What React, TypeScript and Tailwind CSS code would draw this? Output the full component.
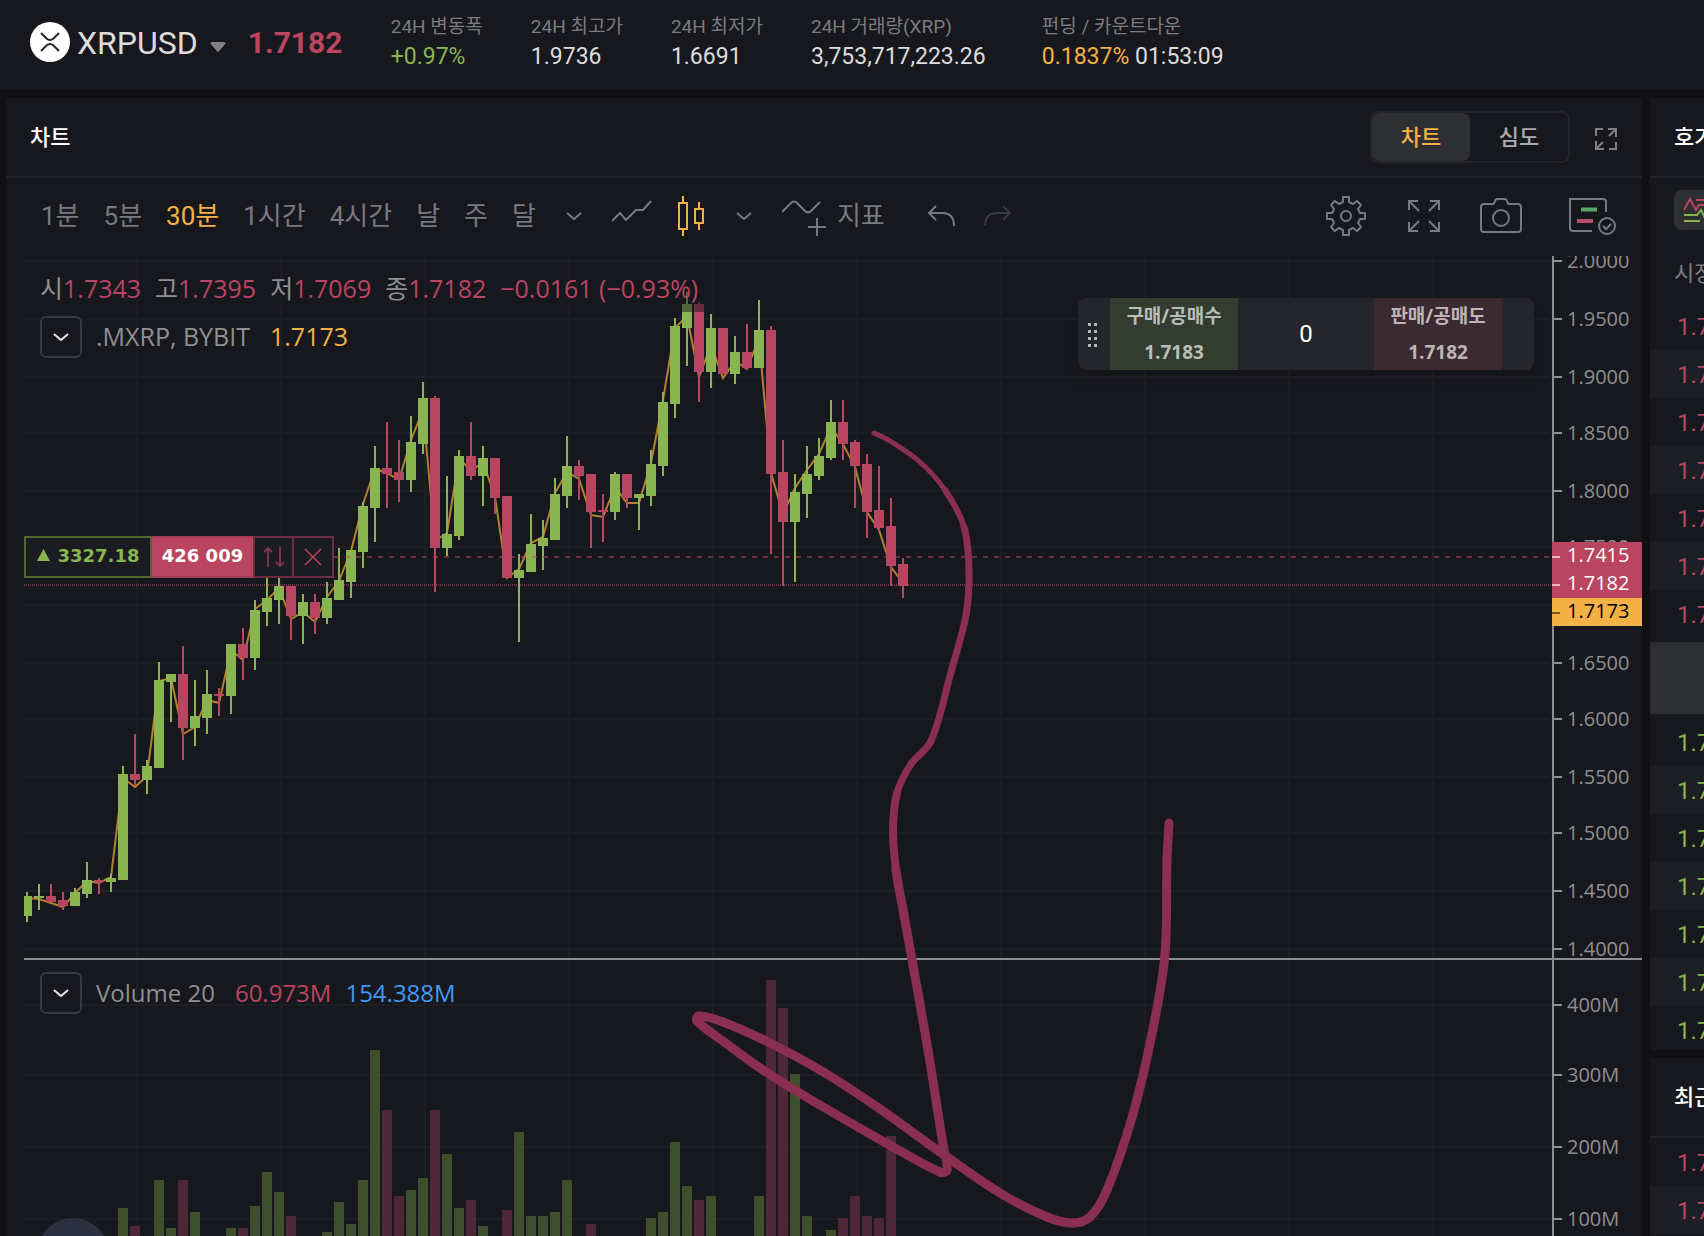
import type { ReactNode } from "react";

const FONT_UI = "font-[Roboto,'Noto_Sans_CJK_KR',sans-serif]";
const FONT_CHART = "font-['Open_Sans','Noto_Sans_CJK_KR',sans-serif]";

type Candle = [up: 0 | 1, high: number, top: number, bottom: number, low: number];

const FIRST_X = 27;
const STEP = 12;

const candles: Candle[] = [
  [1, 892, 896, 916, 922], [1, 884, 896, 898, 910], [0, 884, 896, 902, 902], [0, 892, 900, 906, 910],
  [1, 888, 892, 906, 906], [1, 862, 880, 894, 898], [0, 878, 880, 882, 894], [1, 874, 878, 882, 892],
  [1, 766, 774, 880, 880], [0, 734, 774, 780, 786], [1, 760, 766, 780, 794], [1, 662, 680, 768, 768],
  [1, 674, 674, 682, 722], [0, 646, 674, 728, 760], [1, 680, 716, 728, 746], [1, 670, 694, 718, 734],
  [0, 688, 694, 696, 716], [1, 644, 644, 696, 714], [0, 628, 644, 658, 680], [1, 600, 610, 658, 670],
  [1, 572, 598, 612, 626], [1, 574, 586, 600, 624], [0, 586, 586, 616, 640], [1, 594, 602, 616, 644],
  [0, 594, 602, 618, 634], [1, 582, 598, 618, 624], [1, 548, 580, 600, 600], [1, 550, 550, 582, 598],
  [1, 502, 506, 552, 568], [1, 446, 468, 508, 542], [0, 422, 468, 474, 508], [0, 440, 472, 480, 502],
  [1, 416, 442, 480, 492], [1, 382, 398, 444, 454], [0, 396, 398, 548, 592], [1, 476, 534, 548, 556],
  [1, 450, 456, 536, 540], [0, 422, 456, 476, 480], [1, 446, 458, 476, 506], [0, 458, 458, 498, 514],
  [0, 496, 496, 578, 578], [1, 554, 570, 578, 642], [1, 514, 544, 572, 572], [1, 520, 538, 546, 570],
  [1, 478, 494, 540, 540], [1, 436, 466, 496, 508], [0, 460, 466, 476, 500], [0, 474, 474, 512, 548],
  [0, 494, 510, 512, 542], [1, 472, 474, 512, 520], [0, 474, 474, 498, 508], [1, 494, 494, 498, 530],
  [1, 450, 464, 496, 506], [1, 392, 402, 466, 476], [1, 318, 326, 404, 418], [1, 292, 304, 328, 366],
  [0, 302, 304, 372, 402], [1, 314, 328, 372, 388], [0, 328, 328, 374, 374], [1, 336, 352, 374, 384],
  [0, 324, 352, 368, 370], [1, 300, 330, 368, 368], [0, 326, 330, 474, 554], [0, 440, 472, 522, 586],
  [1, 474, 492, 522, 582], [1, 446, 474, 494, 518], [1, 438, 456, 476, 480], [1, 400, 422, 458, 460],
  [0, 400, 422, 444, 460], [0, 440, 442, 466, 508], [0, 454, 464, 512, 538], [0, 466, 510, 528, 532],
  [0, 498, 526, 566, 586], [0, 558, 564, 586, 598],
];

const markLine = [
  898, 899, 903, 907, 893, 881, 883, 877, 778, 787, 776, 681, 678, 734, 727, 700, 703, 650, 660, 609,
  600, 588, 619, 612, 622, 597, 581, 551, 504, 469, 473, 480, 440, 410, 541, 533, 458, 471, 462, 497,
  578, 569, 543, 537, 493, 472, 479, 515, 517, 487, 503, 503, 463, 400, 328, 316, 377, 345, 378, 361,
  369, 338, 473, 514, 488, 470, 454, 427, 444, 467, 512, 530, 567, 583,
];

type Bar = [index: number, up: 0 | 1, top: number];

const volumes: Bar[] = [
  [8, 1, 1208], [9, 0, 1226], [11, 1, 1180], [12, 1, 1228], [13, 0, 1180], [14, 1, 1212], [17, 1, 1228],
  [18, 0, 1228], [19, 1, 1206], [20, 1, 1172], [21, 1, 1192], [22, 0, 1216], [25, 1, 1232], [26, 1, 1202],
  [27, 1, 1224], [28, 1, 1180], [29, 1, 1050], [30, 0, 1110], [31, 0, 1196], [32, 1, 1190], [33, 1, 1178],
  [34, 0, 1110], [35, 1, 1154], [36, 1, 1208], [37, 0, 1200], [38, 1, 1226], [40, 0, 1210], [41, 1, 1132],
  [42, 1, 1216], [43, 1, 1216], [44, 1, 1212], [45, 1, 1180], [47, 0, 1224], [52, 1, 1218], [53, 1, 1212],
  [54, 1, 1142], [55, 1, 1186], [56, 0, 1200], [57, 1, 1196], [61, 1, 1196], [62, 0, 980], [63, 0, 1008],
  [64, 1, 1074], [65, 1, 1216], [67, 1, 1230], [68, 0, 1218], [69, 0, 1196], [70, 0, 1216], [71, 0, 1218],
  [72, 0, 1136],
];

const priceTicks: [string, number][] = [
  ["2.0000", 261], ["1.9500", 319], ["1.9000", 377], ["1.8500", 433], ["1.8000", 491], ["1.7500", 547],
  ["", 605], ["1.6500", 663], ["1.6000", 719], ["1.5500", 777], ["1.5000", 833], ["1.4500", 891], ["1.4000", 949],
];
const volumeTicks: [string, number][] = [["400M", 1005], ["300M", 1075], ["200M", 1147], ["100M", 1219]];
const timeLines = [137, 281, 425, 569, 713, 857, 1001, 1145, 1289, 1433];

type Point = [x: number, y: number, width: number];

// Brush stroke: each point carries the pen width used up to the next one.
const brush: Point[] = [
  [874, 433, 5], [890, 441, 5], [920, 462, 5], [945, 490, 6], [964, 527, 7], [969, 571, 7], [966, 615, 7],
  [951, 672, 7], [931, 741, 7], [911, 764, 7], [897, 793, 8], [893, 830, 8], [896, 870, 9], [904, 915, 9],
  [913, 965, 9], [928, 1050, 9], [943, 1145, 9], [947, 1170, 9], [940, 1172, 9], [893, 1147, 9],
  [813, 1101, 9], [763, 1070, 9], [727, 1044, 9], [697, 1021, 9], [699, 1016, 9], [723, 1022, 9],
  [772, 1044, 9], [825, 1073, 9], [880, 1109, 9], [940, 1152, 9], [1000, 1193, 9], [1047, 1217, 9],
  [1073, 1223, 9], [1090, 1217, 9], [1107, 1190, 9], [1133, 1114, 9], [1153, 1029, 9], [1165, 954, 9],
  [1167, 860, 9], [1169, 823, 9],
];

function brushSegment(i: number) {
  const a = brush[Math.max(0, i - 1)];
  const b = brush[i];
  const c = brush[i + 1];
  const e = brush[Math.min(brush.length - 1, i + 2)];
  const len = Math.hypot(c[0] - b[0], c[1] - b[1]);
  const t1 = len / (Math.hypot(c[0] - a[0], c[1] - a[1]) || 1) / 3;
  const t2 = len / (Math.hypot(e[0] - b[0], e[1] - b[1]) || 1) / 3;
  return `M${b[0]} ${b[1]} C${b[0] + (c[0] - a[0]) * t1} ${b[1] + (c[1] - a[1]) * t1} ${c[0] - (e[0] - b[0]) * t2} ${c[1] - (e[1] - b[1]) * t2} ${c[0]} ${c[1]}`;
}

const cx = (i: number) => FIRST_X + STEP * i;

function Plot() {
  return (
    <svg className="absolute inset-0 h-full w-full" aria-hidden="true">
      <g transform="translate(-24 -256)">
        <g fill="#1e1f24">
          {timeLines.map((x) => (
            <rect key={x} x={x - 1} y="256" width="2" height="1200" />
          ))}
          {[...priceTicks, ...volumeTicks].map(([, y]) => (
            <rect key={y} x="25" y={y - 1} width="1525" height="2" />
          ))}
        </g>
        {volumes.map(([i, up, top]) => (
          <rect key={i} x={cx(i) - 5} y={top} width="10" height={1400 - top} fill={up ? "#3f4e2d" : "#4e2838"} />
        ))}
        <circle cx="73" cy="1254" r="36" fill="#2d3040" />
        <path d="M24 585H1552" stroke="#782f48" strokeWidth="2" strokeDasharray="1 1" />
        <polyline
          points={markLine.map((y, i) => `${cx(i)},${y}`).join(" ")}
          fill="none"
          stroke="#b0822f"
          strokeWidth="2"
        />
        {candles.map(([up, high, top, bottom, low], i) => (
          <g key={i} fill={up ? "#8ab44f" : "#b94561"}>
            <rect x={cx(i) - 1} y={high} width="2" height={low - high} />
            <rect x={cx(i) - 5} y={top} width="10" height={bottom - top} />
          </g>
        ))}
        <path d="M334 557H1552" stroke="#b94561" strokeOpacity=".5" strokeWidth="2" strokeDasharray="5 6" />
      </g>
    </svg>
  );
}

function Drawing() {
  return (
    <svg className="pointer-events-none absolute inset-0 h-full w-full" aria-hidden="true">
      <g transform="translate(-24 -256)" fill="none" stroke="#8b2f50" strokeLinecap="round" strokeLinejoin="round">
        {brush.slice(0, -1).map((p, i) => (
          <path key={i} d={brushSegment(i)} strokeWidth={p[2]} />
        ))}
      </g>
    </svg>
  );
}

function Axis() {
  return (
    <svg className="h-full w-full" fontSize="20" role="img" aria-label="가격 축">
      <g transform="translate(-1552 -256)">
        <rect x="1552" y="256" width="2" height="1200" fill="#8e8f93" />
        {[...priceTicks, ...volumeTicks].map(([label, y]) => (
          <g key={y} fill="#8e8f93">
            <rect x="1554" y={y - 1} width="8" height="2" />
            <text x="1567" y={y + 7}>{label}</text>
          </g>
        ))}
        <rect x="1552" y="542" width="90" height="56" fill="#b94561" />
        <rect x="1552" y="598" width="90" height="28" fill="#f4b145" />
        <g fill="#fff">
          <rect x="1552" y="556" width="8" height="2" fillOpacity=".6" />
          <rect x="1552" y="584" width="8" height="2" fillOpacity=".6" />
          <text x="1567" y="562">1.7415</text>
          <text x="1567" y="590">1.7182</text>
        </g>
        <rect x="1552" y="612" width="8" height="2" fillOpacity=".5" />
        <text x="1567" y="618">1.7173</text>
      </g>
    </svg>
  );
}

function Chevron({ className = "" }: { className?: string }) {
  return (
    <svg className={className} width="16" height="8" viewBox="0 0 16 8" fill="none" stroke="currentColor" strokeWidth="2">
      <path d="M1 1l7 6 7-6" />
    </svg>
  );
}

function Stat({ label, children }: { label: string; children: ReactNode }) {
  return (
    <div className="whitespace-nowrap last:pl-2">
      <dt className="text-[19px] leading-7 text-[#7b7c80]">{label}</dt>
      <dd className="text-[23px] leading-8 text-[#dcdcdd]">{children}</dd>
    </div>
  );
}

function Header() {
  return (
    <header className="flex h-[90px] shrink-0 items-start bg-[#17181e] pl-[30px]">
      <div className="flex h-[84px] items-center">
        <svg width="40" height="40" viewBox="0 0 40 40" role="img" aria-label="XRP">
          <circle cx="20" cy="20" r="20" fill="#fff" />
          <path
            d="M11 11l5.500 5.500q3.500 3 7 0L29 11M11 29l5.500-5.500q3.500-3 7 0L29 29"
            fill="none"
            stroke="#23292f"
            strokeWidth="2"
          />
        </svg>
        <button type="button" className="ml-[7px] flex items-center gap-3 pt-[2px] text-[32px] leading-10 text-[#dcdcdd]">
          XRPUSD
          <svg className="mt-2" width="16" height="10" viewBox="0 0 16 10" fill="#808083">
            <path d="M2 0h12q2.500 .5 1.200 2L9.200 9q-1.200 1.400-2.400 0L.8 2Q-.5 .5 2 0z" />
          </svg>
        </button>
        <strong className="ml-[22px] w-[94px] pt-[2px] text-[30px] leading-10 font-bold text-[#b94561]">1.7182</strong>
      </div>
      <dl className="ml-[49px] flex gap-12 pt-[13px]">
        <Stat label="24H 변동폭"><span className="text-[#8ab44f]">+0.97%</span></Stat>
        <Stat label="24H 최고가">1.9736</Stat>
        <Stat label="24H 최저가">1.6691</Stat>
        <Stat label="24H 거래량(XRP)">3,753,717,223.26</Stat>
        <Stat label="펀딩 / 카운트다운"><span className="text-[#f4b145]">0.1837%</span> 01:53:09</Stat>
      </dl>
    </header>
  );
}

function PanelHead() {
  return (
    <div className="flex h-20 shrink-0 items-center border-b-2 border-[#24252a] pr-[25px] pl-6">
      <h2 className="text-[22px] font-medium text-white">차트</h2>
      <div className="ml-auto flex h-[52px] w-[200px] rounded-lg border-2 border-[#24252a] text-[22px] font-medium">
        <button type="button" className="flex-1 rounded-lg bg-[#2e2f33] text-[#f4b145]">차트</button>
        <button type="button" className="flex-1 text-[#a9aaad]">심도</button>
      </div>
      <button type="button" aria-label="확대" className="mt-1 ml-[25px] text-[#808083]">
        <svg width="22" height="22" viewBox="0 0 22 22" fill="none" stroke="currentColor" strokeWidth="2">
          <path d="M1 8V1h7M13 1h8v8M21 1l-7 7M21 14v7h-7M1 13v8h8M1 21l7-7" />
        </svg>
      </button>
    </div>
  );
}

const intervals = ["1분", "5분", "30분", "1시간", "4시간", "날", "주", "달"];

function Toolbar() {
  return (
    <div className="flex h-[78px] shrink-0 items-center pr-[26px] pb-[2px] pl-[35px] text-[26px] text-[#787883]">
      <div className="flex gap-6 leading-8">
        {intervals.map((t) => (
          <button key={t} type="button" className={t === "30분" ? "text-[#f4b145]" : ""}>{t}</button>
        ))}
      </div>
      <button type="button" aria-label="시간 간격" className="ml-[30px]"><Chevron /></button>
      <button type="button" aria-label="라인" className="ml-[30px]">
        <svg width="40" height="40" viewBox="0 0 40 40" fill="none" stroke="currentColor" strokeWidth="2">
          <path d="M0 25l8-8 6 7 10-10h7l8-9" />
        </svg>
      </button>
      <button type="button" aria-label="캔들" className="ml-[26px] text-[#f4b145]">
        <svg width="26" height="40" viewBox="0 0 26 40" fill="none" stroke="currentColor" strokeWidth="2">
          <path d="M1 7h8v26H1zM5 0v7M5 33v7M17 13h8v14h-8zM21 6v7M21 27v7" />
        </svg>
      </button>
      <button type="button" aria-label="차트 유형" className="ml-8"><Chevron /></button>
      <button type="button" className="ml-[30px] flex items-center gap-[11px] leading-8">
        <svg width="44" height="44" viewBox="0 0 44 44" fill="none" stroke="currentColor" strokeWidth="2">
          <path d="M0 18l9-9q3-3 6 0l8 8q3 3 6 0l9-9M35 24v18M26 33h18" />
        </svg>
        지표
      </button>
      <button type="button" aria-label="실행 취소" className="ml-[43px]">
        <svg width="28" height="24" viewBox="0 0 28 24" fill="none" stroke="currentColor" strokeWidth="2">
          <path d="M8 2L1 9l7 7M1 9h13q12 0 12 13" />
        </svg>
      </button>
      <button type="button" aria-label="다시 실행" className="ml-7 text-[#38393f]">
        <svg width="28" height="24" viewBox="0 0 28 24" fill="none" stroke="currentColor" strokeWidth="2">
          <path d="M19 2l7 7-7 7M26 9H13Q1 9 1 22" />
        </svg>
      </button>
      <div className="ml-auto flex items-center">
        <button type="button" aria-label="설정">
          <svg width="40" height="40" viewBox="0 0 40 40" fill="none" stroke="currentColor" strokeWidth="2" strokeLinejoin="round">
            <path d="M17 1h6v5l4 2 4-3 4 4-3 4 2 4h5v6h-5l-2 4 3 4-4 4-4-3-4 2v5h-6v-5l-4-2-4 3-4-4 3-4-2-4H1v-6h5l2-4-3-4 4-4 4 3 4-2z" />
            <circle cx="20" cy="20" r="5" />
          </svg>
        </button>
        <button type="button" aria-label="전체 화면" className="ml-[42px]">
          <svg width="32" height="32" viewBox="0 0 32 32" fill="none" stroke="currentColor" strokeWidth="2">
            <path d="M1 10V1h9M1 1l10 10M22 1h9v9M31 1L21 11M1 22v9h9M1 31l10-10M31 22v9h-9M31 31L21 21" />
          </svg>
        </button>
        <button type="button" aria-label="스크린샷" className="ml-10">
          <svg width="42" height="36" viewBox="0 0 42 36" fill="none" stroke="currentColor" strokeWidth="2">
            <path d="M4 6h9q1 0 1.500-1.500L15 3q.5-2 2.500-2h7q2 0 2.500 2l.5 1.500Q28 6 29 6h9q3 0 3 3v22q0 3-3 3H4q-3 0-3-3V9q0-3 3-3z" />
            <circle cx="21" cy="20" r="8" />
          </svg>
        </button>
        <button type="button" aria-label="주문 표시" className="ml-[47px]">
          <svg width="47" height="38" viewBox="0 0 47 38" fill="none" stroke="currentColor" strokeWidth="2">
            <path d="M23 34H4q-3 0-3-3V2h33q3 0 3 3v10" />
            <path d="M12 12.500h16" stroke="#55a765" strokeWidth="4" />
            <path d="M8 24h16" stroke="#b3506a" strokeWidth="4" />
            <circle cx="38" cy="29" r="8" />
            <path d="M34 29l3 3 5-5" />
          </svg>
        </button>
      </div>
    </div>
  );
}

function Ohlc({ k, v }: { k: string; v: string }) {
  return (
    <span className="text-[#8e8f93]">{k}<span className="text-[#b94561]">{v}</span></span>
  );
}

function CollapseButton({ label }: { label: string }) {
  return (
    <button
      type="button"
      aria-label={label}
      className="flex size-[42px] items-center justify-center rounded-md border-2 border-[#363743] bg-[#17181e] text-[#e4e4ea]"
    >
      <Chevron />
    </button>
  );
}

function OrderWidget() {
  return (
    <div className="absolute top-[42px] right-[18px] flex h-[72px] w-[456px] overflow-hidden rounded-lg bg-[#25262b] shadow-lg">
      <div className="flex w-8 items-center justify-center pr-[2px]">
        <svg width="10" height="26" viewBox="0 0 10 26" fill="#b5b6ba">
          {[2, 9, 16, 23].map((y) => (
            <g key={y}>
              <rect x="0" y={y} width="3" height="3" />
              <rect x="6" y={y} width="3" height="3" />
            </g>
          ))}
        </svg>
      </div>
      <button type="button" className="w-32 bg-[#333c2f] text-[19px] leading-9 font-bold text-[#b8bdb5]">
        <span className="block">구매/공매수</span>
        <span className="block">1.7183</span>
      </button>
      <input
        aria-label="수량"
        defaultValue="0"
        className="min-w-0 flex-1 bg-transparent text-center font-[Roboto,sans-serif] text-2xl text-white outline-none"
      />
      <button type="button" className="w-32 bg-[#3c2a31] text-[19px] leading-9 font-bold text-[#bfb3b7]">
        <span className="block">판매/공매도</span>
        <span className="block">1.7182</span>
      </button>
      <div className="w-8" />
    </div>
  );
}

function Position() {
  return (
    <div className="absolute top-[280px] left-0 flex h-[42px] items-stretch bg-[#1b1c21] font-['DejaVu_Sans',sans-serif] text-[18px] font-bold">
      <div className="flex w-32 items-center justify-center gap-2 border-2 border-[#51652f] pb-1 text-[#8ab44f]">
        <svg width="13" height="12" viewBox="0 0 13 12" fill="currentColor"><path d="M6.500 0L13 12H0z" /></svg>
        3327.18
      </div>
      <div className="flex w-[101px] items-center justify-center border-y-2 border-[#a03d57] bg-[#b94561] pb-1 text-white">426 009</div>
      <button type="button" aria-label="포지션 반전" className="flex w-[41px] items-center justify-center border-2 border-[#6b2e43] text-[#7d344b]">
        <svg width="20" height="20" viewBox="0 0 20 20" fill="none" stroke="currentColor" strokeWidth="2">
          <path d="M4 20V1M0 5l4-4 4 4M16 0v19M12 15l4 4 4-4" />
        </svg>
      </button>
      <button type="button" aria-label="포지션 닫기" className="flex w-10 items-center justify-center border-y-2 border-r-2 border-[#6b2e43] text-[#b94561]">
        <svg width="18" height="18" viewBox="0 0 18 18" fill="none" stroke="currentColor" strokeWidth="1.500">
          <path d="M1 1l16 16M17 1L1 17" />
        </svg>
      </button>
    </div>
  );
}

function ChartArea() {
  return (
    <div className={`relative flex min-h-0 flex-1 pl-[18px] ${FONT_CHART}`}>
      <div className="relative min-w-0 flex-1">
        <Plot />
        <div className="relative h-[702px] pt-3 pl-4">
          <div className="flex w-max gap-[14px] bg-[#17181e]/50 pr-2 pb-1 text-[25px] leading-10 whitespace-nowrap text-[#b94561]">
            <Ohlc k="시" v="1.7343" />
            <Ohlc k="고" v="1.7395" />
            <Ohlc k="저" v="1.7069" />
            <Ohlc k="종" v="1.7182" />
            <span>−0.0161 (−0.93%)</span>
          </div>
          <div className="mt-1 flex items-center text-[25px] text-[#8e8f93]">
            <CollapseButton label="지표 접기" />
            <span className="ml-[14px]">.MXRP, BYBIT</span>
            <span className="ml-5 text-[#f4b145]">1.7173</span>
          </div>
        </div>
        <div className="relative flex items-center pt-[14px] pl-4 text-2xl text-[#8e8f93]">
          <CollapseButton label="거래량 접기" />
          <span className="ml-[14px]">Volume 20</span>
          <span className="ml-5 text-[#b94561]">60.973M</span>
          <span className="ml-[14px] text-[#4298f5]">154.388M</span>
        </div>
        <Position />
        <OrderWidget />
      </div>
      <div className="w-[90px] shrink-0"><Axis /></div>
      <div className="absolute top-[702px] right-0 left-[18px] h-[2px] bg-[#8e8f93]" />
      <div className="pointer-events-none absolute inset-0 left-[18px]"><Drawing /></div>
    </div>
  );
}

function PriceRows({ count, className }: { count: number; className: string }) {
  return (
    <ul className={className}>
      {Array.from({ length: count }, (_, i) => (
        <li key={i} className="h-12 pl-[27px] text-2xl leading-[50px] odd:bg-[#17181e] even:bg-[#1e1f24]">1.7</li>
      ))}
    </ul>
  );
}

function SideColumn() {
  return (
    <aside className="flex w-[54px] shrink-0 flex-col gap-2 overflow-hidden whitespace-nowrap">
      <section className="h-[952px] shrink-0 overflow-hidden bg-[#17181e]">
        <h2 className="flex h-20 w-24 items-center border-b-2 border-[#24252a] pl-6 text-[22px] font-medium text-white">호가</h2>
        <div className="h-[64px] w-24 pt-3 pl-6">
          <button type="button" aria-label="호가창 보기" className="block size-10 rounded-lg bg-[#2e2f33]">
            <svg width="40" height="40" viewBox="0 0 40 40" fill="none" strokeWidth="2">
              <path d="M10 20l6-11 6 11 3-5h9M22 10h12" stroke="#b94561" />
              <path d="M10 25h13l4-5 4 8h4M10 31h16" stroke="#8ab44f" />
            </svg>
          </button>
        </div>
        <p className="h-[60px] w-24 pt-[2px] pl-6 text-[22px] leading-[60px] text-[#7b7c80]">시장</p>
        <PriceRows count={7} className="text-[#b94561]" />
        <div className="my-1 h-[72px] bg-[#2e2f33]" />
        <PriceRows count={7} className="text-[#8ab44f]" />
      </section>
      <section className="min-h-0 flex-1 overflow-hidden bg-[#17181e]">
        <h2 className="flex h-20 w-24 items-center border-b-2 border-[#24252a] pl-6 text-[22px] font-medium text-white">최근</h2>
        <PriceRows count={3} className="text-[#b94561]" />
      </section>
    </aside>
  );
}

export default function App() {
  return (
    <div className={`flex h-screen flex-col gap-2 overflow-hidden bg-[#101014] ${FONT_UI}`}>
      <Header />
      <main className="flex min-h-0 flex-1 gap-2 pl-[6px]">
        <section className="flex min-w-0 flex-1 flex-col bg-[#17181e]">
          <PanelHead />
          <Toolbar />
          <ChartArea />
        </section>
        <SideColumn />
      </main>
    </div>
  );
}
